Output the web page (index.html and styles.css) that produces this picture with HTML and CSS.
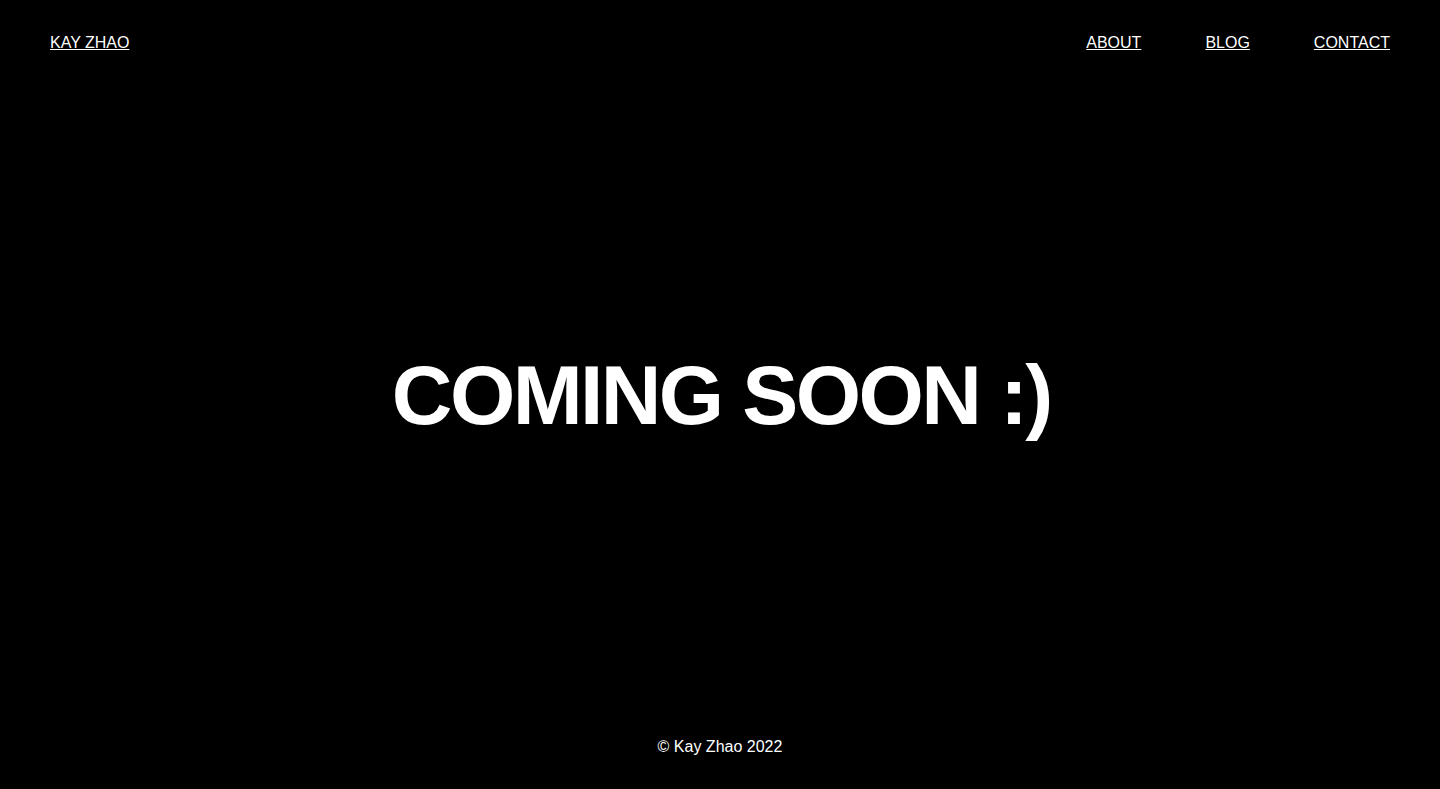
FILE: index.html
```html
<!DOCTYPE html>
<html lang="en">
<head>
<meta charset="utf-8">
<title>Kay Zhao</title>
<link rel="stylesheet" href="styles.css">
</head>
<body>
<div class="page">
  <header class="header">
    <a class="brand" href="#">KAY ZHAO</a>
    <nav class="nav">
      <a href="#">ABOUT</a>
      <a href="#">BLOG</a>
      <a href="#">CONTACT</a>
    </nav>
  </header>
  <main class="main">
    <h1 class="title">COMING SOON :)</h1>
  </main>
  <footer class="footer">© Kay Zhao 2022</footer>
</div>
</body>
</html>
```
FILE: styles.css
```css
html, body {
  margin: 0;
  padding: 0;
  background: #000;
  color: #fff;
  font-family: "Liberation Sans", Arial, sans-serif;
  font-size: 16px;
}
.page {
  height: 100vh;
  display: flex;
  flex-direction: column;
}
.header {
  display: flex;
  justify-content: space-between;
  align-items: center;
  padding: 34px 50px 0;
  line-height: 18px;
}
.header a {
  color: #fff;
  text-decoration: underline;
}
.nav {
  display: flex;
  gap: 64px;
}
.main {
  flex: 1;
  display: flex;
  align-items: center;
  justify-content: center;
}
.title {
  margin: 0;
  font-size: 84px;
  font-weight: 700;
  line-height: 1;
  letter-spacing: -2.6px;
  margin-right: -2.6px;
}
.footer {
  text-align: center;
  line-height: 18px;
  padding-bottom: 33px;
}
```
